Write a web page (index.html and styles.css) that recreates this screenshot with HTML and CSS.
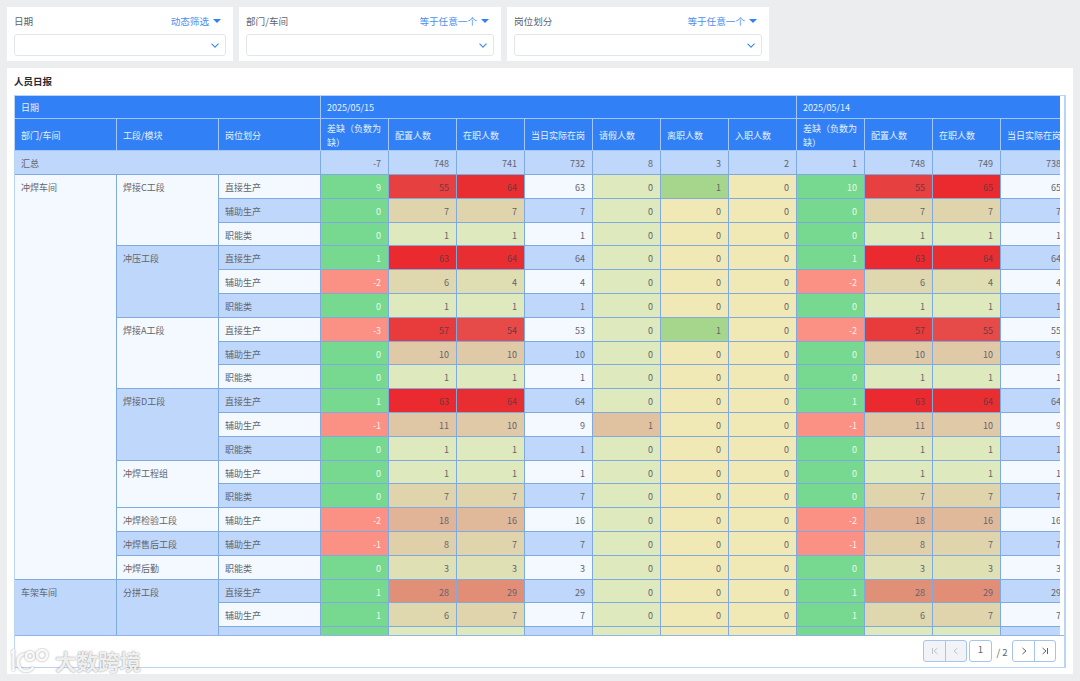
FILE: index.html
```html
<!DOCTYPE html>
<html lang="zh-CN">
<head>
<meta charset="utf-8">
<title>人员日报</title>
<link rel="stylesheet" href="styles.css">
</head>
<body>
<div class="filters">
  <section class="filter filter-s">
    <div class="filter-head"><span>日期</span><span class="mode">动态筛选<i class="caret"></i></span></div>
    <div class="select"><svg class="chev" viewBox="0 0 8 5"><path d="M.5.7 4 4.2 7.5.7"/></svg></div>
  </section>
  <section class="filter filter-l">
    <div class="filter-head"><span>部门/车间</span><span class="mode">等于任意一个<i class="caret"></i></span></div>
    <div class="select"><svg class="chev" viewBox="0 0 8 5"><path d="M.5.7 4 4.2 7.5.7"/></svg></div>
  </section>
  <section class="filter filter-l">
    <div class="filter-head"><span>岗位划分</span><span class="mode">等于任意一个<i class="caret"></i></span></div>
    <div class="select"><svg class="chev" viewBox="0 0 8 5"><path d="M.5.7 4 4.2 7.5.7"/></svg></div>
  </section>
</div>
<main class="report">
  <h1 class="title">人员日报</h1>
  <div class="table-box">
    <div class="viewport">
      <div class="grid">
        <div class="c hd col3">日期</div><div class="c hd col7">2025/05/15</div><div class="c hd col4">2025/05/14</div>
        <div class="c hd">部门/车间</div><div class="c hd">工段/模块</div><div class="c hd">岗位划分</div>
        <div class="c hd">差缺（负数为缺）</div><div class="c hd">配置人数</div><div class="c hd">在职人数</div><div class="c hd">当日实际在岗</div><div class="c hd">请假人数</div><div class="c hd">离职人数</div><div class="c hd">入职人数</div>
        <div class="c hd">差缺（负数为缺）</div><div class="c hd">配置人数</div><div class="c hd">在职人数</div><div class="c hd">当日实际在岗</div>

        <div class="c sum col3">汇总</div><div class="c sum n">-7</div><div class="c sum n">748</div><div class="c sum n">741</div><div class="c sum n">732</div><div class="c sum n">8</div><div class="c sum n">3</div><div class="c sum n">2</div><div class="c sum n">1</div><div class="c sum n">748</div><div class="c sum n">749</div><div class="c sum n">738</div>

        <div class="c lt rows17">冲焊车间</div><div class="c lt rows3">焊接C工段</div><div class="c lt">直接生产</div><div class="c n up">9</div><div class="c n h55">55</div><div class="c n h64">64</div><div class="c n lt">63</div><div class="c n a0">0</div><div class="c n b1">1</div><div class="c n b0">0</div><div class="c n up">10</div><div class="c n h55">55</div><div class="c n h65">65</div><div class="c n lt">65</div>
        <div class="c bl">辅助生产</div><div class="c n up">0</div><div class="c n h7">7</div><div class="c n h7">7</div><div class="c n bl">7</div><div class="c n a0">0</div><div class="c n b0">0</div><div class="c n b0">0</div><div class="c n up">0</div><div class="c n h7">7</div><div class="c n h7">7</div><div class="c n bl">7</div>
        <div class="c lt">职能类</div><div class="c n up">0</div><div class="c n h1">1</div><div class="c n h1">1</div><div class="c n lt">1</div><div class="c n a0">0</div><div class="c n b0">0</div><div class="c n b0">0</div><div class="c n up">0</div><div class="c n h1">1</div><div class="c n h1">1</div><div class="c n lt">1</div>

        <div class="c bl rows3">冲压工段</div><div class="c bl">直接生产</div><div class="c n up">1</div><div class="c n h65">63</div><div class="c n h64">64</div><div class="c n bl">64</div><div class="c n a0">0</div><div class="c n b0">0</div><div class="c n b0">0</div><div class="c n up">1</div><div class="c n h65">63</div><div class="c n h64">64</div><div class="c n bl">64</div>
        <div class="c lt">辅助生产</div><div class="c n down">-2</div><div class="c n h6">6</div><div class="c n h4">4</div><div class="c n lt">4</div><div class="c n a0">0</div><div class="c n b0">0</div><div class="c n b0">0</div><div class="c n down">-2</div><div class="c n h6">6</div><div class="c n h4">4</div><div class="c n lt">4</div>
        <div class="c bl">职能类</div><div class="c n up">0</div><div class="c n h1">1</div><div class="c n h1">1</div><div class="c n bl">1</div><div class="c n a0">0</div><div class="c n b0">0</div><div class="c n b0">0</div><div class="c n up">0</div><div class="c n h1">1</div><div class="c n h1">1</div><div class="c n bl">1</div>

        <div class="c lt rows3">焊接A工段</div><div class="c lt">直接生产</div><div class="c n down">-3</div><div class="c n h57">57</div><div class="c n h54">54</div><div class="c n lt">53</div><div class="c n a0">0</div><div class="c n b1">1</div><div class="c n b0">0</div><div class="c n down">-2</div><div class="c n h57">57</div><div class="c n h54">55</div><div class="c n lt">55</div>
        <div class="c bl">辅助生产</div><div class="c n up">0</div><div class="c n h10">10</div><div class="c n h10">10</div><div class="c n bl">10</div><div class="c n a0">0</div><div class="c n b0">0</div><div class="c n b0">0</div><div class="c n up">0</div><div class="c n h10">10</div><div class="c n h10">10</div><div class="c n bl">9</div>
        <div class="c lt">职能类</div><div class="c n up">0</div><div class="c n h1">1</div><div class="c n h1">1</div><div class="c n lt">1</div><div class="c n a0">0</div><div class="c n b0">0</div><div class="c n b0">0</div><div class="c n up">0</div><div class="c n h1">1</div><div class="c n h1">1</div><div class="c n lt">1</div>

        <div class="c bl rows3">焊接D工段</div><div class="c bl">直接生产</div><div class="c n up">1</div><div class="c n h65">63</div><div class="c n h64">64</div><div class="c n bl">64</div><div class="c n a0">0</div><div class="c n b0">0</div><div class="c n b0">0</div><div class="c n up">1</div><div class="c n h65">63</div><div class="c n h64">64</div><div class="c n bl">64</div>
        <div class="c lt">辅助生产</div><div class="c n down">-1</div><div class="c n h11">11</div><div class="c n h10">10</div><div class="c n lt">9</div><div class="c n a1">1</div><div class="c n b0">0</div><div class="c n b0">0</div><div class="c n down">-1</div><div class="c n h11">11</div><div class="c n h10">10</div><div class="c n lt">9</div>
        <div class="c bl">职能类</div><div class="c n up">0</div><div class="c n h1">1</div><div class="c n h1">1</div><div class="c n bl">1</div><div class="c n a0">0</div><div class="c n b0">0</div><div class="c n b0">0</div><div class="c n up">0</div><div class="c n h1">1</div><div class="c n h1">1</div><div class="c n bl">1</div>

        <div class="c lt rows2">冲焊工程组</div><div class="c lt">辅助生产</div><div class="c n up">0</div><div class="c n h1">1</div><div class="c n h1">1</div><div class="c n lt">1</div><div class="c n a0">0</div><div class="c n b0">0</div><div class="c n b0">0</div><div class="c n up">0</div><div class="c n h1">1</div><div class="c n h1">1</div><div class="c n lt">1</div>
        <div class="c bl">职能类</div><div class="c n up">0</div><div class="c n h7">7</div><div class="c n h7">7</div><div class="c n bl">7</div><div class="c n a0">0</div><div class="c n b0">0</div><div class="c n b0">0</div><div class="c n up">0</div><div class="c n h7">7</div><div class="c n h7">7</div><div class="c n bl">7</div>

        <div class="c lt">冲焊检验工段</div><div class="c lt">辅助生产</div><div class="c n down">-2</div><div class="c n h18">18</div><div class="c n h16">16</div><div class="c n lt">16</div><div class="c n a0">0</div><div class="c n b0">0</div><div class="c n b0">0</div><div class="c n down">-2</div><div class="c n h18">18</div><div class="c n h16">16</div><div class="c n lt">16</div>
        <div class="c bl">冲焊售后工段</div><div class="c bl">辅助生产</div><div class="c n down">-1</div><div class="c n h8">8</div><div class="c n h7">7</div><div class="c n bl">7</div><div class="c n a0">0</div><div class="c n b0">0</div><div class="c n b0">0</div><div class="c n down">-1</div><div class="c n h8">8</div><div class="c n h7">7</div><div class="c n bl">7</div>
        <div class="c lt">冲焊后勤</div><div class="c lt">职能类</div><div class="c n up">0</div><div class="c n h3">3</div><div class="c n h3">3</div><div class="c n lt">3</div><div class="c n a0">0</div><div class="c n b0">0</div><div class="c n b0">0</div><div class="c n up">0</div><div class="c n h3">3</div><div class="c n h3">3</div><div class="c n lt">3</div>

        <div class="c bl rows3">车架车间</div><div class="c bl rows3">分拼工段</div><div class="c bl">直接生产</div><div class="c n up">1</div><div class="c n h28">28</div><div class="c n h29">29</div><div class="c n bl">29</div><div class="c n a0">0</div><div class="c n b0">0</div><div class="c n b0">0</div><div class="c n up">1</div><div class="c n h28">28</div><div class="c n h29">29</div><div class="c n bl">29</div>
        <div class="c lt">辅助生产</div><div class="c n up">1</div><div class="c n h6">6</div><div class="c n h7">7</div><div class="c n lt">7</div><div class="c n a0">0</div><div class="c n b0">0</div><div class="c n b0">0</div><div class="c n up">1</div><div class="c n h6">6</div><div class="c n h7">7</div><div class="c n lt">7</div>
        <div class="c bl"></div><div class="c n up"></div><div class="c n h1"></div><div class="c n h1"></div><div class="c n bl"></div><div class="c n a0"></div><div class="c n b0"></div><div class="c n b0"></div><div class="c n up"></div><div class="c n h1"></div><div class="c n h1"></div><div class="c n bl"></div>
      </div>
    </div>
    <div class="pager">
      <div class="btn-group off">
        <button class="btn" type="button"><svg viewBox="0 0 10 10"><path d="M2.500 2v6M7.500 2 4 5l3.500 3"/></svg></button>
        <button class="btn" type="button"><svg viewBox="0 0 10 10"><path d="M6.500 2 3 5l3.500 3"/></svg></button>
      </div>
      <div class="page-now">1</div>
      <span class="page-total">/ 2</span>
      <div class="btn-group">
        <button class="btn" type="button"><svg viewBox="0 0 10 10"><path d="M3.500 2 7 5 3.500 8"/></svg></button>
        <button class="btn" type="button"><svg viewBox="0 0 10 10"><path d="M2.500 2 6 5 2.500 8M7.500 2v6"/></svg></button>
      </div>
    </div>
  </div>
</main>
<div class="watermark">
  <svg class="wm-logo" viewBox="0 0 40 26"><path class="wm-line" d="M1 5 3.500 3V23"/><path class="wm-line" d="M16 6C10 6 8 10 8 14c0 6 4 9 8 9 3 0 6-2 7-4"/><circle class="wm-line" cx="20" cy="8" r="4"/><circle class="wm-line" cx="32" cy="7" r="5"/></svg>
  <span class="wm-text">大数跨境</span>
</div>
</body>
</html>
```
FILE: styles.css
```css
* { box-sizing: border-box; }
html, body { margin: 0; height: 681px; overflow: hidden; }
body {
  background: #ecedef;
  padding: 7px;
  font-family: "Noto Sans CJK SC", "Noto Sans", sans-serif;
  font-size: 9px;
  color: #5f6570;
  display: flex;
  flex-direction: column;
  gap: 7px;
  position: relative;
}

.filters { display: flex; gap: 6px; height: 54px; }
.filter { background: #fff; padding: 0 7px; }
.filter-s { width: 226px; }
.filter-l { width: 262px; }
.filter-head {
  height: 27px;
  display: flex;
  justify-content: space-between;
  align-items: center;
  font-size: 9.600px;
  padding-right: 5px;
}
.filter-head .mode { color: #4b8fee; display: flex; align-items: center; }
.caret {
  width: 0; height: 0;
  margin-left: 4px;
  border-left: 4px solid transparent;
  border-right: 4px solid transparent;
  border-top: 4px solid #3280f5;
}
.select {
  height: 22px;
  border: 1px solid #e2e5ea;
  border-radius: 3px;
  background: #fff;
  display: flex;
  justify-content: flex-end;
  align-items: center;
  padding-right: 6px;
}
.chev { width: 8px; height: 5px; fill: none; stroke: #3f87ee; stroke-width: 1.100; }

.report { background: #fff; height: 606px; padding: 0 7px 6px; display: flex; flex-direction: column; }
.title { margin: 0; height: 27px; line-height: 27px; font-size: 9.500px; font-weight: 700; color: #262a30; }

.table-box {
  flex: 1;
  min-height: 0;
  border: 1px solid #bcd4f3;
  border-right-width: 2px;
  display: flex;
  flex-direction: column;
}
.viewport { width: 1045px; height: 540px; overflow: hidden; flex: none; }
.grid {
  display: grid;
  width: 1054px;
  grid-template-columns: repeat(3, 102px) repeat(11, 68px);
  grid-template-rows: 23px 32px 24px repeat(20, 23.800px);
}
.c {
  border-right: 1px solid #7faae0;
  border-bottom: 1px solid #7faae0;
  padding: 0 6px;
  line-height: 25px;
  white-space: nowrap;
  overflow: hidden;
  min-width: 0;
}
.n { text-align: right; padding-right: 7px; }
.hd {
  background: #3280f5;
  color: #e6f0fe;
  border-color: #a3c7f8;
  white-space: normal;
  line-height: 14px;
  padding-top: 2px;
  display: flex;
  align-items: center;
}
.sum { background: #bfd7fa; }
.lt { background: #f4f9ff; }
.bl { background: #bfd7fa; }
.col3 { grid-column: span 3; }
.col7 { grid-column: span 7; }
.col4 { grid-column: span 4; }
.rows2 { grid-row: span 2; }
.rows3 { grid-row: span 3; }
.rows17 { grid-row: span 17; }

.up { background: #76d98f; color: rgba(255, 255, 255, .88); }
.down { background: #fb9185; color: rgba(255, 255, 255, .88); }
.a0 { background: #dfe9be; }
.a1 { background: #e1c2a0; }
.b0 { background: #f0e9b5; }
.b1 { background: #a5d68b; }
.h1 { background: #dfe9be; }
.h3 { background: #dfe0b4; }
.h4 { background: #dfdeb3; }
.h6 { background: #dfd8ae; }
.h7 { background: #e0d4ac; }
.h8 { background: #e0d0a9; }
.h10 { background: #dfc9a7; }
.h11 { background: #dfc7a5; }
.h16 { background: #e0b99a; }
.h18 { background: #e1b397; }
.h28 { background: #e19078; }
.h29 { background: #e28e77; }
.h54 { background: #e64b4a; color: #6b3a40; }
.h55 { background: #e74041; color: #6b3a40; }
.h57 { background: #e73b3c; color: #6b3a40; }
.h64 { background: #e92e32; color: #6b3a40; }
.h65 { background: #ea2a2e; color: #6b3a40; }

.pager {
  flex: 1;
  border-top: 1px solid #8fb5e6;
  margin-top: -1px;
  display: flex;
  justify-content: flex-end;
  align-items: flex-start;
  padding: 4px 8px 0 0;
  position: relative;
  background: #fff;
}
.btn-group { display: flex; border: 1px solid #a6c5ec; border-radius: 3px; height: 22px; overflow: hidden; background: #fff; }
.btn {
  width: 21px;
  padding: 0;
  border: 0;
  background: transparent;
  display: flex;
  align-items: center;
  justify-content: center;
}
.btn + .btn { border-left: 1px solid #a6c5ec; }
.btn svg { width: 10px; height: 10px; fill: none; stroke: #4d525a; stroke-width: .9; }
.off { background: #f1f3f6; }
.off .btn svg { stroke: #b9bfc8; }
.page-now {
  width: 23px;
  height: 22px;
  margin-left: 2px;
  border: 1px solid #a6c5ec;
  border-radius: 3px;
  text-align: center;
  line-height: 17px;
  font-size: 9.500px;
}
.page-total { width: 20px; text-align: center; line-height: 24px; font-size: 9.500px; }

.watermark {
  position: absolute;
  left: 10px;
  top: 648px;
  display: flex;
  align-items: center;
  gap: 5px;
  height: 26px;
}
.wm-logo { width: 40px; height: 26px; fill: none; }
.wm-line { stroke: rgba(255, 255, 255, .9); stroke-width: 2.600px; fill: none; filter: drop-shadow(0 0 1px rgba(90, 90, 90, .6)); }
.wm-text {
  font-size: 21.500px;
  line-height: 26px;
  font-weight: 700;
  color: rgba(255, 255, 255, .88);
  text-shadow: 0 0 1.500px rgba(80, 80, 80, .8);
}
```
